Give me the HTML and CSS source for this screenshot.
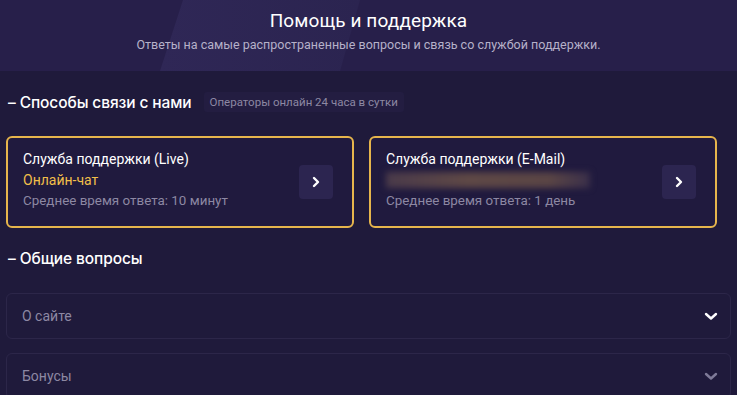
FILE: index.html
```html
<!DOCTYPE html>
<html lang="ru">

<head>
    <meta charset="UTF-8">
    <meta name="viewport" content="width=device-width, initial-scale=1.0">
    <title>Помощь и поддержка</title>
    <link rel="stylesheet" href="styles.css">
</head>

<body>
    <!-- шапка -->
    <header class="hero">
        <h1 class="hero-title">Помощь и поддержка</h1>
        <p class="hero-sub">Ответы на самые распространенные вопросы и связь со службой поддержки.</p>
    </header>

    <main class="content">
        <!-- способы связи -->
        <div class="section-head">
            <h2 class="section-title">– Способы связи с нами</h2>
            <span class="badge">Операторы онлайн 24 часа в сутки</span>
        </div>

        <div class="contacts">
            <a class="contact" href="#">
                <div class="contact-info">
                    <div class="contact-name">Служба поддержки (Live)</div>
                    <div class="contact-link">Онлайн-чат</div>
                    <div class="contact-time">Среднее время ответа: 10 минут</div>
                </div>
                <span class="go">
                    <svg width="14" height="14" viewBox="0 0 14 14"><polyline points="5,3 9,7 5,11" fill="none" stroke="#fff" stroke-width="2.4" stroke-linecap="round" stroke-linejoin="round"/></svg>
                </span>
            </a>
            <a class="contact" href="#">
                <div class="contact-info">
                    <div class="contact-name">Служба поддержки (E-Mail)</div>
                    <div class="contact-link"><span class="hidden-mail"></span></div>
                    <div class="contact-time">Среднее время ответа: 1 день</div>
                </div>
                <span class="go">
                    <svg width="14" height="14" viewBox="0 0 14 14"><polyline points="5,3 9,7 5,11" fill="none" stroke="#fff" stroke-width="2.4" stroke-linecap="round" stroke-linejoin="round"/></svg>
                </span>
            </a>
        </div>

        <!-- вопросы -->
        <div class="section-head">
            <h2 class="section-title">– Общие вопросы</h2>
        </div>

        <div class="faq">
            <div class="faq-item">
                <span>О сайте</span>
                <svg class="arrow" width="16" height="16" viewBox="0 0 16 16"><polyline points="3,6 8,10.5 13,6" fill="none" stroke="#fff" stroke-width="2.4" stroke-linecap="round" stroke-linejoin="round"/></svg>
            </div>
            <div class="faq-item">
                <span>Бонусы</span>
                <svg class="arrow dim" width="16" height="16" viewBox="0 0 16 16"><polyline points="3,6 8,10.5 13,6" fill="none" stroke="#fff" stroke-width="2.4" stroke-linecap="round" stroke-linejoin="round"/></svg>
            </div>
        </div>
    </main>
</body>

</html>
```

FILE: styles.css
```css
* {
    margin: 0;
    padding: 0;
    box-sizing: border-box;
}

body {
    background-color: #1f1a3b;
    font-family: "Roboto", "Noto Sans", sans-serif;
    color: #fff;
    overflow: hidden;
}

/* шапка */
.hero {
    position: relative;
    height: 71px;
    background-color: #271f4a;
    text-align: center;
    padding-top: 8px;
    overflow: hidden;
}

/* диагональная полоса */
.hero::before {
    content: "";
    position: absolute;
    top: 0;
    bottom: 0;
    left: 160px;
    width: 200px;
    background: linear-gradient(90deg, #2f2756, #2b2450);
    clip-path: polygon(23px 0, 200px 0, 180px 100%, 0 100%);
}

.hero-title,
.hero-sub {
    position: relative;
}

.hero-title {
    font-size: 19px;
    font-weight: 400;
    line-height: 26px;
    letter-spacing: 0.1px;
}

.hero-sub {
    margin-top: 3px;
    font-size: 12.5px;
    color: #b6b1c9;
}

.content {
    padding: 19px 6px 0 6px;
}

.section-head {
    display: flex;
    align-items: center;
    gap: 12px;
    padding-left: 2px;
    height: 24px;
}

.section-title {
    font-family: "Inter", "Roboto", sans-serif;
    font-size: 15.5px;
    font-weight: 500;
    letter-spacing: -0.1px;
}

.badge {
    background-color: #231d41;
    color: #8d88a3;
    font-size: 11.5px;
    padding: 3px 6px;
    border-radius: 3px;
}

/* способы связи */
.contacts {
    display: grid;
    grid-template-columns: 348px 348px;
    gap: 15px;
    margin-top: 22px;
    margin-bottom: 18px;
}

.contact {
    display: flex;
    align-items: center;
    justify-content: space-between;
    height: 92px;
    padding: 0 19px 4px 15px;
    border: 2px solid #e6b54c;
    border-radius: 6px;
    background-color: #201a3e;
    text-decoration: none;
    color: #fff;
}

.contact-name {
    font-size: 14px;
    line-height: 20px;
}

.contact-link {
    color: #f1bf4a;
    font-size: 14px;
    line-height: 22px;
    height: 22px;
    display: flex;
    align-items: center;
}

.hidden-mail {
    display: block;
    width: 204px;
    height: 16px;
    background: linear-gradient(90deg, #4a3a4a, #5e4846 40%, #5a4545 80%, #3a2f4a);
    filter: blur(3px);
}

.contact-time {
    color: #8d88a3;
    font-size: 13.4px;
    line-height: 20px;
}

.go {
    width: 34px;
    height: 34px;
    border-radius: 4px;
    background-color: #2c2550;
    display: flex;
    align-items: center;
    justify-content: center;
    margin-top: 4px;
}

/* вопросы */
.faq {
    margin-top: 23px;
    display: flex;
    flex-direction: column;
    gap: 14px;
}

.faq-item {
    height: 46px;
    border: 1px solid #2c2649;
    border-radius: 6px;
    display: flex;
    align-items: center;
    justify-content: space-between;
    padding: 0 11px 0 15px;
    color: #8d88a3;
    font-size: 14px;
}

.arrow.dim polyline {
    stroke: #7e7a98;
}
```
